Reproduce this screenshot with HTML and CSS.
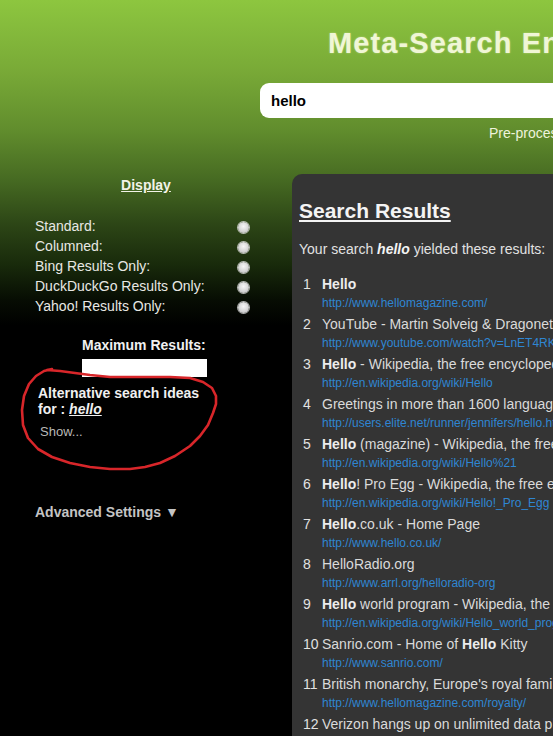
FILE: index.html
```html
<!DOCTYPE html>
<html>
<head>
<meta charset="utf-8">
<title>Meta-Search Engine</title>
<link rel="stylesheet" href="styles.css">
</head>
<body>
<header class="header">
  <h1 class="title">Meta-Search Engine</h1>
  <div class="searchbar">hello</div>
  <div class="preproc">Pre-processing:</div>
</header>
<div class="main">
  <aside class="side">
    <h2 class="side-title">Display</h2>
    <div class="options">
      <div class="opt"><span>Standard:</span><span class="radio"></span></div>
      <div class="opt"><span>Columned:</span><span class="radio"></span></div>
      <div class="opt"><span>Bing Results Only:</span><span class="radio"></span></div>
      <div class="opt"><span>DuckDuckGo Results Only:</span><span class="radio"></span></div>
      <div class="opt"><span>Yahoo! Results Only:</span><span class="radio"></span></div>
    </div>
    <div class="maxres">
      <div class="maxres-label">Maximum Results:</div>
      <div class="maxres-input"></div>
    </div>
    <div class="alt">
      <div class="alt-title">Alternative search ideas<br>for : <em class="alt-q">hello</em></div>
      <div class="alt-show">Show...</div>
    </div>
    <div class="advanced">Advanced Settings ▼</div>
    <svg class="scribble" width="292" height="320" viewBox="0 0 292 320">
      <polyline points="47,196 60,197 75,199 90,201 110,203 140,203 170,203 190,204 203,208 212,214 216,222 216,230 213,239 208,251 200,262 190,272 175,282 160,289 145,293 130,295 110,295 90,293 70,289 52,283 38,275 28,264 23,251 22,236 24,222 29,210 36,202 44,197 52,195"/>
    </svg>
  </aside>
  <section class="results">
    <h2 class="res-title">Search Results</h2>
    <p class="res-intro">Your search <b><i>hello</i></b> yielded these results:</p>
    <ol class="res-list">
      <li class="item"><span class="num">1</span><span class="ttl"><b>Hello</b></span><span class="url">http://www.hellomagazine.com/</span></li>
      <li class="item"><span class="num">2</span><span class="ttl">YouTube - Martin Solveig &amp; Dragonette - Hello</span><span class="url">http://www.youtube.com/watch?v=LnET4RKlq8A</span></li>
      <li class="item"><span class="num">3</span><span class="ttl"><b>Hello</b> - Wikipedia, the free encyclopedia</span><span class="url">http://en.wikipedia.org/wiki/Hello</span></li>
      <li class="item"><span class="num">4</span><span class="ttl">Greetings in more than 1600 languages</span><span class="url">http://users.elite.net/runner/jennifers/hello.htm</span></li>
      <li class="item"><span class="num">5</span><span class="ttl"><b>Hello</b> (magazine) - Wikipedia, the free encyclopedia</span><span class="url">http://en.wikipedia.org/wiki/Hello%21</span></li>
      <li class="item"><span class="num">6</span><span class="ttl"><b>Hello</b>! Pro Egg - Wikipedia, the free encyclopedia</span><span class="url">http://en.wikipedia.org/wiki/Hello!_Pro_Egg</span></li>
      <li class="item"><span class="num">7</span><span class="ttl"><b>Hello</b>.co.uk - Home Page</span><span class="url">http://www.hello.co.uk/</span></li>
      <li class="item"><span class="num">8</span><span class="ttl">HelloRadio.org</span><span class="url">http://www.arrl.org/helloradio-org</span></li>
      <li class="item"><span class="num">9</span><span class="ttl"><b>Hello</b> world program - Wikipedia, the free encyclopedia</span><span class="url">http://en.wikipedia.org/wiki/Hello_world_program</span></li>
      <li class="item"><span class="num">10</span><span class="ttl">Sanrio.com - Home of <b>Hello</b> Kitty</span><span class="url">http://www.sanrio.com/</span></li>
      <li class="item"><span class="num">11</span><span class="ttl">British monarchy, Europe's royal families</span><span class="url">http://www.hellomagazine.com/royalty/</span></li>
      <li class="item"><span class="num">12</span><span class="ttl">Verizon hangs up on unlimited data plans</span><span class="url">http://www.hellomagazine.com/</span></li>
    </ol>
  </section>
</div>
</body>
</html>
```
FILE: styles.css
```css
html, body {
  margin: 0;
  padding: 0;
}
body {
  width: 553px;
  height: 736px;
  overflow: hidden;
  font-family: "Liberation Sans", Arial, sans-serif;
  background: linear-gradient(to bottom, #8dc63f 0px, #79aa37 70px, #618d2d 130px, #466a22 180px, #2c4516 225px, #182a0b 265px, #070d03 300px, #000 325px, #000 100%);
}
.header {
  height: 174px;
  overflow: hidden;
}
.title {
  margin: 0;
  padding: 26px 0 0 328px;
  font: bold 29px/34px "Liberation Sans", Arial, sans-serif;
  letter-spacing: 1.1px;
  color: #f0f6d6;
  text-shadow: 0 0 2px rgba(255, 255, 220, 0.5);
  white-space: nowrap;
}
.searchbar {
  margin: 23px 0 0 260px;
  width: 420px;
  height: 35px;
  box-sizing: border-box;
  padding-left: 11px;
  display: flex;
  align-items: center;
  background: #fff;
  border-radius: 9px;
  font: bold 15px "Liberation Sans", Arial, sans-serif;
  color: #000;
}
.preproc {
  margin: 7px 0 0 489px;
  font-size: 14px;
  line-height: 16px;
  color: #eef3dc;
  white-space: nowrap;
}
.main {
  display: flex;
  align-items: flex-start;
}
.side {
  position: relative;
  flex: none;
  width: 292px;
  padding-top: 3px;
  color: #eeeeea;
}
.side-title {
  margin: 0;
  text-align: center;
  font-size: 14px;
  line-height: 16px;
  font-weight: bold;
  text-decoration: underline;
  color: #f2f3e8;
}
.options {
  margin: 23px 0 0 35px;
  width: 214px;
}
.opt {
  display: flex;
  justify-content: space-between;
  align-items: center;
  height: 20px;
  font-size: 14px;
  color: #e8e8e4;
}
.radio {
  width: 11px;
  height: 11px;
  margin-top: 2px;
  border-radius: 50%;
  background: radial-gradient(circle at 50% 40%, #f6f6f6 0, #dcdcdc 45%, #b4b4b4 100%);
  box-shadow: 0 0 0 1px rgba(235, 235, 235, 0.75);
}
.maxres {
  margin: 21px 0 0 82px;
}
.maxres-label {
  font-size: 14px;
  line-height: 16px;
  font-weight: bold;
  color: #f0f0f0;
}
.maxres-input {
  margin-top: 6px;
  width: 125px;
  height: 18px;
  background: #fff;
}
.alt {
  margin: 8px 0 0 38px;
}
.alt-title {
  font-size: 14px;
  line-height: 16px;
  font-weight: bold;
  color: #f0f0f0;
}
.alt-q {
  text-decoration: underline;
}
.alt-show {
  margin: 7px 0 0 2px;
  font-size: 13px;
  line-height: 16px;
  color: #b8b8b8;
}
.advanced {
  margin: 64px 0 0 35px;
  font-size: 14px;
  line-height: 16px;
  font-weight: bold;
  color: #c4c4c4;
}
.scribble {
  position: absolute;
  left: 0;
  top: 0;
  overflow: visible;
  pointer-events: none;
}
.scribble polyline {
  fill: none;
  stroke: #d8262a;
  stroke-width: 2.6;
  stroke-linejoin: round;
  stroke-linecap: round;
}
.results {
  flex: 1;
  min-width: 0;
  height: 562px;
  box-sizing: border-box;
  padding: 25px 0 0 7px;
  background: #343434;
  border-top-left-radius: 10px;
  overflow: hidden;
  white-space: nowrap;
}
.res-title {
  margin: 0;
  font-size: 21px;
  line-height: 24px;
  font-weight: bold;
  text-decoration: underline;
  color: #f4f4f4;
}
.res-intro {
  margin: 17px 0 0;
  font-size: 14px;
  line-height: 18px;
  color: #e2e2e2;
}
.res-intro b {
  color: #f4f4f4;
}
.res-list {
  list-style: none;
  margin: 16px 0 0 4px;
  padding: 0;
}
.item {
  display: grid;
  grid-template-columns: 19px auto;
  margin-bottom: 2px;
}
.num {
  font-size: 14px;
  line-height: 20px;
  color: #e2e2e2;
}
.ttl {
  font-size: 14px;
  line-height: 20px;
  color: #dadada;
}
.ttl b {
  color: #ececec;
}
.url {
  grid-column: 2;
  font-size: 12px;
  line-height: 18px;
  color: #2f86d2;
}
```
